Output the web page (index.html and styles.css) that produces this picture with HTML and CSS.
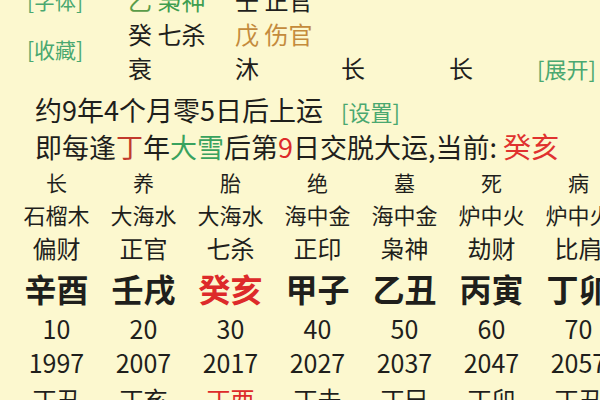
FILE: index.html
```html
<!DOCTYPE html>
<html lang="zh">
<head>
<meta charset="utf-8">
<link rel="stylesheet" href="styles.css">
</head>
<body>
<div class="page">
  <div class="top">
    <div class="label l1">[字体]</div>
    <div class="cell"><span class="g1">乙</span> <span class="green">枭神</span></div>
    <div class="cell">壬 正官</div>
    <div class="label l2">[收藏]</div>
    <div class="cell r2 c2">癸 七杀</div>
    <div class="cell r2 c3 brown">戊 伤官</div>
    <div class="cell r3 c2">衰</div>
    <div class="cell r3 c3">沐</div>
    <div class="cell r3 c4">长</div>
    <div class="cell r3 c5">长</div>
    <div class="label open r3 c6">[展开]</div>
  </div>
  <div class="info">
    <div class="line">约9年4个月零5日后上运<span class="label set">[设置]</span></div>
    <div class="line">即每逢<span class="dred">丁</span>年<span class="green2">大雪</span>后第<span class="red">9</span>日交脱大运,当前: <span class="cur">癸亥</span></div>
  </div>
  <div class="grid">
    <div class="col">
      <div class="s">长</div><div class="n">石榴木</div><div class="t">偏财</div><div class="gz">辛酉</div><div class="age">10</div><div class="yr">1997</div><div class="ln">丁丑</div>
    </div>
    <div class="col">
      <div class="s">养</div><div class="n">大海水</div><div class="t">正官</div><div class="gz">壬戌</div><div class="age">20</div><div class="yr">2007</div><div class="ln">丁亥</div>
    </div>
    <div class="col">
      <div class="s">胎</div><div class="n">大海水</div><div class="t">七杀</div><div class="gz red">癸亥</div><div class="age">30</div><div class="yr">2017</div><div class="ln red">丁酉</div>
    </div>
    <div class="col">
      <div class="s">绝</div><div class="n">海中金</div><div class="t">正印</div><div class="gz">甲子</div><div class="age">40</div><div class="yr">2027</div><div class="ln">丁未</div>
    </div>
    <div class="col">
      <div class="s">墓</div><div class="n">海中金</div><div class="t">枭神</div><div class="gz">乙丑</div><div class="age">50</div><div class="yr">2037</div><div class="ln">丁巳</div>
    </div>
    <div class="col">
      <div class="s">死</div><div class="n">炉中火</div><div class="t">劫财</div><div class="gz">丙寅</div><div class="age">60</div><div class="yr">2047</div><div class="ln">丁卯</div>
    </div>
    <div class="col">
      <div class="s">病</div><div class="n">炉中火</div><div class="t">比肩</div><div class="gz">丁卯</div><div class="age">70</div><div class="yr">2057</div><div class="ln">丁丑</div>
    </div>
  </div>
</div>
</body>
</html>
```
FILE: styles.css
```css
html, body {
  margin: 0;
  padding: 0;
  background: #fcf8cf;
  overflow: hidden;
}
body {
  width: 600px;
  height: 400px;
  font-family: "Noto Sans CJK SC", "Noto Sans", sans-serif;
  font-weight: 400;
  color: #1f1f1c;
}
.page {
  width: 600px;
}
.top {
  display: grid;
  grid-template-columns: 128px 107px 106px 108px 88px auto;
  grid-template-rows: 34px 34px 34px;
  margin-top: -17px;
  font-size: 24px;
  line-height: 34px;
  white-space: nowrap;
}
.label {
  color: #4aa870;
  font-size: 21px;
  font-weight: 400;
}
.open { font-size: 22px; }
.l1 { grid-row: 1; grid-column: 1; padding-left: 27px; }
.l2 { grid-row: 2 / span 2; grid-column: 1; padding-left: 27px; align-self: center; margin-bottom: 4px; }
.r2 { grid-row: 2; }
.r3 { grid-row: 3; }
.c2 { grid-column: 2; }
.c3 { grid-column: 3; }
.c4 { grid-column: 4; }
.c5 { grid-column: 5; }
.c6 { grid-column: 6; }
.g1 { color: #5a9c48; }
.green { color: #3f9e4f; }
.brown { color: #c48b3c; }
.info {
  margin-top: 7px;
  padding-left: 35px;
  font-size: 27px;
  white-space: nowrap;
}
.line {
  height: 36px;
  line-height: 36px;
}
.set {
  font-size: 22px;
  margin-left: 18px;
}
.dred { color: #c23a2c; }
.green2 { color: #38a25e; }
.red { color: #dd2a2a; }
.cur { color: #e0322f; font-size: 28px; }
.grid {
  margin-top: 2px;
  padding-left: 13px;
  display: grid;
  grid-template-columns: repeat(7, 87px);
  white-space: nowrap;
}
.col {
  display: grid;
  grid-template-rows: 32px 32px 34px 48px 32px 36px 36px;
  justify-items: center;
  align-items: center;
}
.s { font-size: 21px; }
.n { font-size: 22px; }
.t { font-size: 24px; }
.gz { font-size: 32px; font-weight: 700; }
.age { font-size: 25px; }
.yr { font-size: 25px; }
.ln { font-size: 24px; }
```
